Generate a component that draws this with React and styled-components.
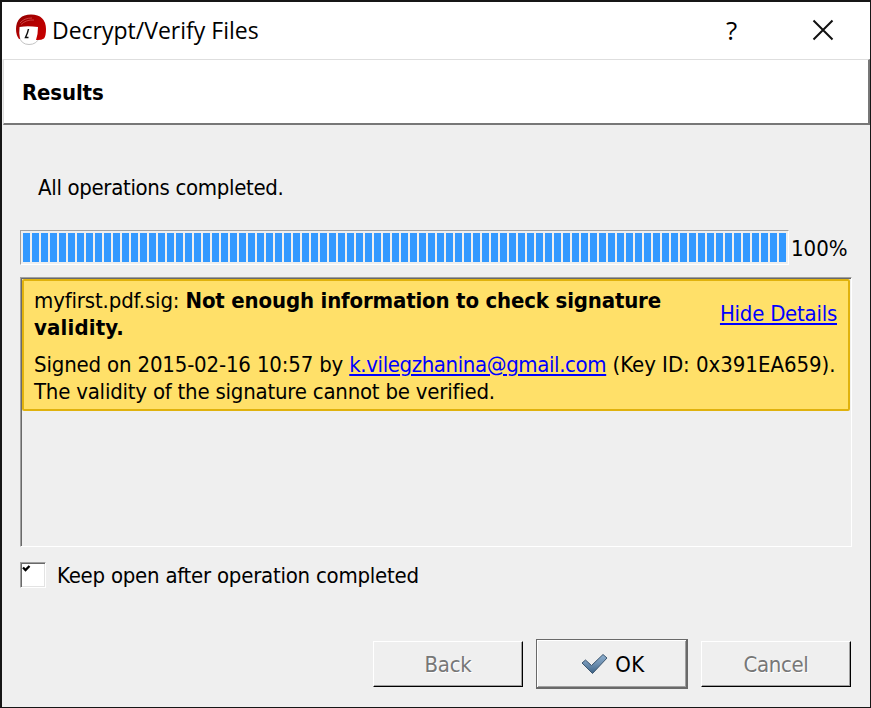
import React from 'react';
import styled, { createGlobalStyle } from 'styled-components';

const GlobalStyle = createGlobalStyle`
  * { box-sizing: border-box; }
  body { margin: 0; background: #efefef; }
`;

const Dialog = styled.div`
  width: 871px;
  height: 708px;
  display: flex;
  flex-direction: column;
  background: #efefef;
  border: solid #161616;
  border-width: 2px 1px 1px 2px;
  color: #000;
  font: 22px/27px 'DejaVu Sans Condensed', 'DejaVu Sans', sans-serif;
  white-space: nowrap;
`;

const TitleBar = styled.header`
  height: 57px;
  flex: none;
  display: flex;
  align-items: center;
  padding: 0 2px 2px 13px;
  background: #fff;
`;

const Title = styled.h1`
  flex: 1;
  margin: 0 0 0 5px;
  font: 23px/30px 'Open Sans', sans-serif;
`;

const CaptionButton = styled.button`
  width: 91px;
  height: 54px;
  padding: 0;
  border: 0;
  background: none;
  display: flex;
  align-items: center;
  justify-content: center;
  font: 26px/30px 'Open Sans', sans-serif;
  color: #000;
`;

const Header = styled.div`
  height: 66px;
  flex: none;
  margin-left: 1px;
  display: flex;
  align-items: center;
  padding: 2px 0 0 18px;
  background: #fff;
  border: solid;
  border-width: 1px 2px 2px 1px;
  border-color: #dedede #777 #777 #dedede;
`;

const Heading = styled.h2`
  margin: 0;
  font-size: 22px;
  font-weight: 700;
  letter-spacing: -0.15px;
`;

const Body = styled.main`
  flex: 1;
  display: flex;
  flex-direction: column;
  padding: 49px 18px 0;
`;

const Text = styled.span`
  letter-spacing: ${(p) => p.$track || 0}px;
`;

const Status = styled.p`
  margin: 0 0 0 18px;
  height: 56px;
`;

const ProgressRow = styled.div`
  display: flex;
  height: 35px;
  gap: 2px;
  align-items: center;
`;

const Percent = styled.span`
  padding-top: 2px;
`;

const Progress = styled.div`
  width: 769px;
  height: 35px;
  padding: 2px;
  border: 1px solid;
  border-color: #a0a0a0 #fff #fff #a0a0a0;
`;

const Bar = styled.div`
  height: 29px;
  width: 763px;
  background: repeating-linear-gradient(90deg, #3399ff 0 7px, transparent 7px 9px);
`;

const Results = styled.section`
  margin-top: 12px;
  width: 832px;
  height: 270px;
  flex: none;
  border: 1px solid;
  border-color: #a0a0a0 #fff #fff #a0a0a0;
`;

const ResultsInner = styled.div`
  height: 268px;
  border: solid #696969;
  border-width: 1px 0 0 1px;
`;

const ResultCard = styled.article`
  width: 828px;
  height: 132px;
  padding: 6px 11px 8px 10px;
  display: flex;
  flex-direction: column;
  gap: 10px;
  background: #ffe069;
  border: 2px solid #e0b20d;
  border-radius: 2px;
`;

const Summary = styled.div`
  display: flex;
  justify-content: space-between;
  align-items: center;
  height: 54px;
`;

const Paragraph = styled.p`
  margin: 0;
  white-space: pre;
`;

const Link = styled.a`
  color: #0000ff;
  text-decoration: underline;
  text-decoration-thickness: 2px;
  text-underline-offset: 2px;
  letter-spacing: ${(p) => p.$track}px;
`;

const SummaryLink = styled(Link)`
  margin-top: -1px;
`;

const Option = styled.label`
  display: flex;
  gap: 11px;
  height: 28px;
  margin-top: 14px;
  align-items: center;
`;

const CheckBox = styled.span`
  width: 26px;
  height: 26px;
  background: #fff;
  border: 1px solid;
  border-color: #a0a0a0 #fff #fff #a0a0a0;
  box-shadow: inset 1px 1px #696969, inset -1px -1px #e3e3e3;
  svg { display: block; }
`;

const Buttons = styled.footer`
  display: flex;
  justify-content: flex-end;
  align-items: center;
  gap: 13px;
  height: 50px;
  margin-top: 50px;
  padding-right: 1px;
`;

const Button = styled.button`
  width: 150px;
  height: 46px;
  padding: 0;
  display: flex;
  align-items: center;
  justify-content: center;
  background: #efefef;
  border: 1px solid;
  border-color: #fff #000 #000 #fff;
  box-shadow: inset -1px -1px #a0a0a0;
  color: #777;
  text-shadow: 1px 1px #fff;
  font: inherit;
`;

const DefaultButton = styled(Button)`
  width: 152px;
  height: 50px;
  gap: 7px;
  padding: 1px 0 0 3px;
  border-color: #696969;
  border-width: 1px 2px 2px 1px;
  box-shadow: inset 1px 1px #fff, inset -1px -1px #a0a0a0;
  color: #000;
  text-shadow: none;
`;

const KleopatraIcon = () => (
  <svg width="32" height="32" viewBox="0 0 32 32">
    <defs>
      <linearGradient id="hair" x1="0" y1="0" x2="1" y2="1">
        <stop offset="0" stopColor="#8c0000" />
        <stop offset=".5" stopColor="#b60000" />
        <stop offset="1" stopColor="#c80000" />
      </linearGradient>
    </defs>
    <path d="M4 12 4 22Q6 30.500 14 30.500Q22 30.500 24.500 23V11Z" fill="#fff" stroke="#bbb" strokeWidth=".9" />
    <path d="M4 25Q1 21 1 15Q1.500 .5 16 .5Q30.500 .5 31 15Q31 22 29 24.500Q26 26.500 21 26L22.500 20 23 13Q12 11.500 4.500 13Q3.500 19 5 25Z" fill="url(#hair)" />
    <path d="M5 9Q9 4 17 4M6 10.500Q11 5.500 19 6" fill="none" stroke="#e05a5a" strokeWidth=".7" />
    <path d="M13.500 15Q13 18 10.500 23.500L13.500 23.500" fill="none" stroke="#111" strokeWidth="1.5" />
  </svg>
);

const CloseIcon = () => (
  <svg width="22" height="22" viewBox="0 0 22 22">
    <path d="M1.500 1.500 20.500 20.500M20.500 1.500 1.500 20.500" stroke="#111" strokeWidth="2" fill="none" />
  </svg>
);

const TickIcon = () => (
  <svg width="12" height="10" viewBox="0 0 12 10">
    <path d="M2 4.500 4.500 7 8.500 3" fill="none" stroke="#000" strokeWidth="2.300" />
  </svg>
);

const OkIcon = () => (
  <svg width="27" height="22" viewBox="0 0 27 22">
    <defs>
      <linearGradient id="tick" x1="0" y1="0" x2="0" y2="1">
        <stop offset="0" stopColor="#8fb0d0" />
        <stop offset=".5" stopColor="#6d8fb0" />
        <stop offset="1" stopColor="#3c6286" />
      </linearGradient>
    </defs>
    <path d="M1 10 4.500 7 10.500 12.500 22 1.500 26 5 11.500 20.500Z" fill="url(#tick)" stroke="#3d566f" strokeLinejoin="round" />
  </svg>
);

export default function App() {
  return (
    <Dialog>
      <GlobalStyle />
      <TitleBar>
        <KleopatraIcon />
        <Title>Decrypt/Verify Files</Title>
        <CaptionButton aria-label="Help">?</CaptionButton>
        <CaptionButton aria-label="Close"><CloseIcon /></CaptionButton>
      </TitleBar>
      <Header><Heading>Results</Heading></Header>
      <Body>
        <Status><Text $track={-0.33}>All operations completed.</Text></Status>
        <ProgressRow>
          <Progress><Bar /></Progress>
          <Percent>100%</Percent>
        </ProgressRow>
        <Results>
          <ResultsInner>
            <ResultCard>
              <Summary>
                <Paragraph>
                  <Text $track={-0.15}>myfirst.pdf.sig: </Text>
                  <b><Text $track={-0.17}>Not enough information to check signature</Text><br />
                  <Text $track={0.15}>validity.</Text></b>
                </Paragraph>
                <SummaryLink $track={-0.25}>Hide Details</SummaryLink>
              </Summary>
              <Paragraph>
                <Text $track={-0.17}>Signed on 2015-02-16 10:57 by </Text>
                <Link $track={-0.39}>k.vilegzhanina@gmail.com</Link>
                <Text $track={-0.03}> (Key ID: 0x391EA659).</Text><br />
                <Text $track={-0.22}>The validity of the signature cannot be verified.</Text>
              </Paragraph>
            </ResultCard>
          </ResultsInner>
        </Results>
        <Option>
          <CheckBox><TickIcon /></CheckBox>
          <Text $track={-0.24}>Keep open after operation completed</Text>
        </Option>
        <Buttons>
          <Button><Text $track={-0.25}>Back</Text></Button>
          <DefaultButton><OkIcon /><Text $track={0.5}>OK</Text></DefaultButton>
          <Button><Text $track={-0.35}>Cancel</Text></Button>
        </Buttons>
      </Body>
    </Dialog>
  );
}
